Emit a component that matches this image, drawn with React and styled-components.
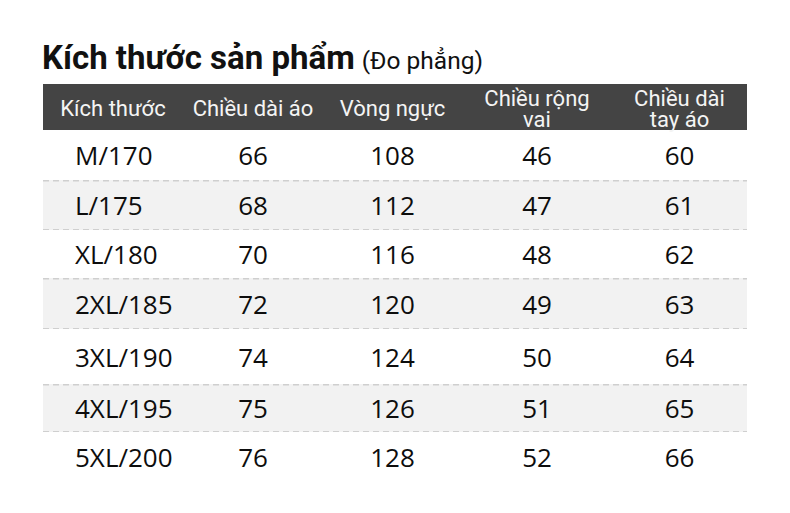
import React from 'react';
import styled, { createGlobalStyle } from 'styled-components';

const GlobalStyle = createGlobalStyle`
  html, body {
    margin: 0;
    padding: 0;
    background: #fff;
  }
  body {
    width: 790px;
    height: 513px;
    overflow: hidden;
  }
`;

const Page = styled.div`
  padding: 40px 43px 0 42px;
  width: 790px;
  box-sizing: border-box;
`;

const Title = styled.h1`
  margin: 0;
  height: 44px;
  display: flex;
  align-items: baseline;
  font-family: Roboto, 'Liberation Sans', sans-serif;
  font-weight: 700;
  font-size: 33px;
  line-height: 36px;
  color: #111;
  white-space: nowrap;
`;

const Note = styled.span`
  font-weight: 400;
  font-size: 24.5px;
  margin-left: 7px;
  color: #111;
`;

const Table = styled.div`
  width: 704px;
  margin-left: 1px;
`;

const cols = '140px 140px 139px 150px 135px';

const HeadRow = styled.div`
  display: grid;
  grid-template-columns: ${cols};
  height: 46px;
  background: #444;
  align-items: center;
`;

const HeadCell = styled.div`
  font-family: Roboto, 'Liberation Sans', sans-serif;
  font-size: 22px;
  line-height: 21px;
  color: #f4f4f4;
  text-align: center;
  white-space: nowrap;
  padding-top: ${p => (p.$two ? '3px' : '3px')};
`;

const dash = 'repeating-linear-gradient(to right, #cfcfcf 0 6px, transparent 6px 10px)';

const Row = styled.div`
  display: grid;
  grid-template-columns: ${cols};
  height: ${p => p.$h}px;
  align-items: center;
  box-sizing: border-box;
  background: ${p =>
    p.$shade
      ? `${dash} top left / 100% 1.5px no-repeat, ${dash} bottom left / 100% 1.5px no-repeat, #f2f2f2`
      : '#fff'};
`;

const Cell = styled.div`
  font-family: 'Open Sans', 'Liberation Sans', sans-serif;
  font-size: 26px;
  color: #0d0d0d;
  text-align: ${p => (p.$left ? 'left' : 'center')};
  padding-left: ${p => (p.$left ? '32px' : '0')};
`;

const rows = [
  ['M/170', 66, 108, 46, 60, 50],
  ['L/175', 68, 112, 47, 61, 50],
  ['XL/180', 70, 116, 48, 62, 48],
  ['2XL/185', 72, 120, 49, 63, 51],
  ['3XL/190', 74, 124, 50, 64, 55],
  ['4XL/195', 75, 126, 51, 65, 48],
  ['5XL/200', 76, 128, 52, 66, 50],
];

export default function App() {
  return (
    <>
      <GlobalStyle />
      <Page>
        <Title>
          Kích thước sản phẩm<Note>(Đo phẳng)</Note>
        </Title>
        <Table>
          <HeadRow>
            <HeadCell>Kích thước</HeadCell>
            <HeadCell>Chiều dài áo</HeadCell>
            <HeadCell>Vòng ngực</HeadCell>
            <HeadCell $two>
              Chiều rộng
              <br />
              vai
            </HeadCell>
            <HeadCell $two>
              Chiều dài
              <br />
              tay áo
            </HeadCell>
          </HeadRow>
          {rows.map(([size, a, b, c, d, h], i) => (
            <Row key={size} $shade={i % 2 === 1} $h={h}>
              <Cell $left>{size}</Cell>
              <Cell>{a}</Cell>
              <Cell>{b}</Cell>
              <Cell>{c}</Cell>
              <Cell>{d}</Cell>
            </Row>
          ))}
        </Table>
      </Page>
    </>
  );
}
